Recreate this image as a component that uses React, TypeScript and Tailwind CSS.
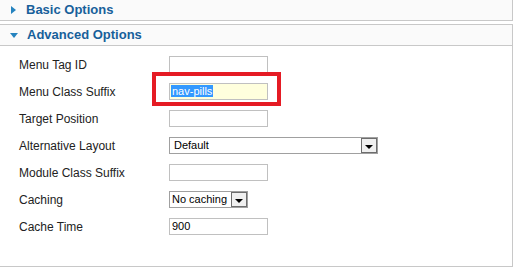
import React from "react";

const font = { fontFamily: '"Liberation Sans", Arial, sans-serif' };

function TextBox({ value }: { value?: string }) {
  return (
    <div className="w-[99px] h-[17px] border border-[#c0c0c0] bg-white text-[11px] text-black leading-[15px] pl-[2px]">
      {value}
    </div>
  );
}

function SelectBox({ value, width, pad }: { value: string; width: string; pad: string }) {
  return (
    <div className={`${width} h-[17px] border border-[#a0a0a0] bg-white flex items-center text-[11px] text-black`}>
      <span className={`flex-1 ${pad} leading-[15px] whitespace-nowrap`}>{value}</span>
      <span className="w-[16px] h-[15px] border border-[#6d6d6d] bg-[#f0f0f0] flex items-center justify-center">
        <span className="block w-0 h-0 border-l-[4px] border-r-[4px] border-t-[4px] border-l-transparent border-r-transparent border-t-black mt-[2px]" />
      </span>
    </div>
  );
}

function Header({ title, open }: { title: string; open?: boolean }) {
  return (
    <div className="h-[21px] bg-[#fafafa] border-b border-[#c8c8c8] flex items-center pl-[10px]">
      {open ? (
        <span className="w-0 h-0 border-l-[4px] border-r-[4px] border-t-[5px] border-l-transparent border-r-transparent border-t-[#2583bf] mr-[9px]" />
      ) : (
        <span className="w-0 h-0 border-t-[4px] border-b-[4px] border-l-[5px] border-t-transparent border-b-transparent border-l-[#2583bf] ml-[1px] mr-[10px]" />
      )}
      <span className="text-[13px] font-bold text-[#17609a]">{title}</span>
    </div>
  );
}

function Row({ label, children }: { label: string; children: React.ReactNode }) {
  return (
    <div className="h-[27px] flex items-center pl-[19px]">
      <span className="w-[150px] text-[12px] text-[#222]">{label}</span>
      {children}
    </div>
  );
}

export default function App() {
  return (
    <div className="w-[514px] h-[268px] bg-white" style={font}>
      <div className="w-[513px] border-r border-[#c8c8c8]">
        <Header title="Basic Options" />
      </div>
      <div className="h-[3px]" />
      <div className="w-[513px] h-[243px] border-t border-r border-b border-[#c8c8c8]">
        <Header title="Advanced Options" open />
        <div className="pt-[5px]">
          <Row label="Menu Tag ID">
            <TextBox />
          </Row>
          <Row label="Menu Class Suffix">
            <div className="relative">
              <div className="w-[99px] h-[17px] border border-[#c0c0c0] bg-[#ffffdd] text-[11px] leading-[15px] pl-[1px]">
                <span className="bg-[#3399ff] text-white px-[1px]">nav-pills</span>
              </div>
              <span className="absolute left-[-17px] top-[-11px] w-[129px] h-[34px] border-[4px] border-[#e51b24]" />
            </div>
          </Row>
          <Row label="Target Position">
            <TextBox />
          </Row>
          <Row label="Alternative Layout">
            <SelectBox value="Default" width="w-[209px]" pad="pl-[4px]" />
          </Row>
          <Row label="Module Class Suffix">
            <TextBox />
          </Row>
          <Row label="Caching">
            <SelectBox value="No caching" width="w-[79px]" pad="pl-[2px]" />
          </Row>
          <Row label="Cache Time">
            <TextBox value="900" />
          </Row>
        </div>
      </div>
    </div>
  );
}
